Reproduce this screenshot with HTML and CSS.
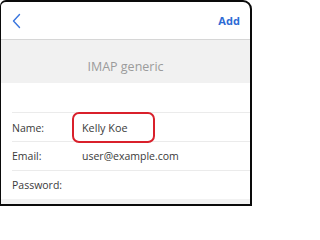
FILE: index.html
```html
<!DOCTYPE html>
<html lang="en">
<head>
<meta charset="utf-8">
<title>IMAP generic</title>
<link rel="stylesheet" href="styles.css">
</head>
<body>
<div class="frame">
  <header class="nav">
    <button class="back" aria-label="Back">
      <svg width="9" height="16" viewBox="0 0 9 16"><polyline points="7.5,1.5 1.5,8 7.5,14.5" fill="none" stroke="#3a76de" stroke-width="1.4" stroke-linecap="round" stroke-linejoin="round"/></svg>
    </button>
    <span class="add">Add</span>
  </header>
  <div class="title-band"><span class="title">IMAP generic</span></div>
  <div class="form">
    <div class="spacer"></div>
    <div class="row">
      <span class="label">Name:</span>
      <span class="value highlight">Kelly Koe</span>
    </div>
    <div class="row">
      <span class="label">Email:</span>
      <span class="value">user@example.com</span>
    </div>
    <div class="row">
      <span class="label">Password:</span>
      <span class="value"></span>
    </div>
  </div>
  <div class="footer"></div>
</div>
</body>
</html>
```

FILE: styles.css
```css
html, body {
  margin: 0;
  padding: 0;
  background: #ffffff;
}
body {
  font-family: "Open Sans", "DejaVu Sans", sans-serif;
  width: 252px;
  height: 206px;
  overflow: hidden;
}
.frame {
  box-sizing: border-box;
  width: 252px;
  height: 206px;
  border-style: solid;
  border-color: #0a0a0a;
  border-width: 2px 2px 2px 1px;
  border-radius: 6px 9px 0 0;
  display: flex;
  flex-direction: column;
  overflow: hidden;
  background: #ffffff;
}
.nav {
  height: 37px;
  flex: none;
  display: flex;
  align-items: center;
  justify-content: space-between;
  padding: 0 10px 0 11px;
  border-bottom: 1px solid #d6d6d6;
}
.back {
  border: 0;
  background: none;
  padding: 0;
  margin: 0;
  width: 9px;
  height: 16px;
  display: flex;
}
.add {
  font-size: 11px;
  font-weight: 700;
  color: #2e6bd4;
  letter-spacing: 0.1px;
}
.title-band {
  height: 43px;
  flex: none;
  background: #f1f1f1;
  display: flex;
  align-items: flex-end;
  justify-content: center;
  box-sizing: border-box;
  padding-bottom: 8px;
}
.title {
  font-size: 12.5px;
  color: #9b9b9b;
  line-height: 16px;
}
.form {
  flex: none;
  padding-left: 11px;
}
.spacer {
  height: 29px;
}
.row {
  box-sizing: border-box;
  height: 29px;
  border-top: 1px solid #ebebeb;
  display: grid;
  grid-template-columns: 70px 1fr;
  align-items: center;
  font-size: 10.5px;
  color: #333333;
}
.label {
  color: #3a3a3a;
}
.value {
  color: #3a3a3a;
}
.highlight {
  box-sizing: border-box;
  width: 83px;
  height: 31px;
  margin-left: -10px;
  margin-top: -1px;
  padding-left: 8px;
  border: 2px solid #d9202b;
  border-radius: 7px;
  display: flex;
  align-items: center;
  font-size: 10.8px;
}
.footer {
  flex: 1;
  background: #f2f2f2;
}
```
